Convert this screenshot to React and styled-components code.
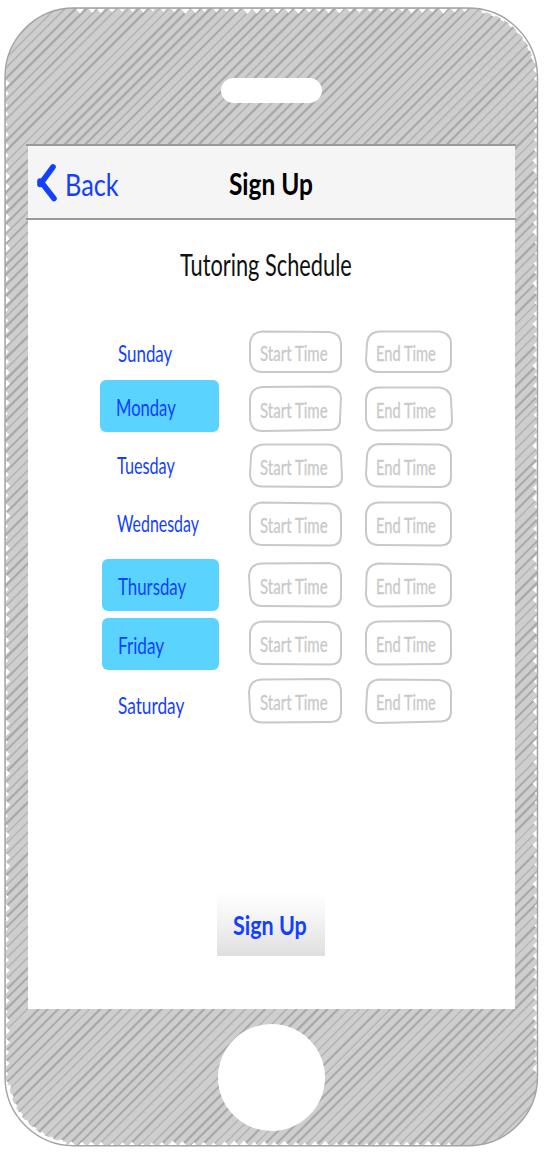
import React, { useLayoutEffect, useRef, useState } from "react";
import styled, { createGlobalStyle } from "styled-components";

const BLUE = "#1240ff";

const GlobalStyle = createGlobalStyle`
  * { box-sizing: border-box; }
  body { margin: 0; background: #fff; }
  button { border: 0; background: none; padding: 0; margin: 0; color: inherit; font: inherit; text-align: left; }
`;

const Phone = styled.div`
  position: relative;
  width: 548px;
  height: 1156px;
  overflow: hidden;
  font-family: Lato, "Open Sans", sans-serif;
`;

const Backdrop = styled.svg`
  position: absolute;
  inset: 0;
`;

const Body = styled.div`
  position: relative;
  display: flex;
  flex-direction: column;
  padding-top: 78px;
`;

const Speaker = styled.div`
  width: 101px;
  height: 25px;
  margin: 0 0 41px 221px;
  border-radius: 13px;
  background: #fff;
`;

const Screen = styled.main`
  display: flex;
  flex-direction: column;
  width: 487px;
  height: 865px;
  margin-left: 28px;
  background: #fff;
`;

const Header = styled.header`
  display: flex;
  flex: none;
  width: 490px;
  height: 76px;
  margin-left: -2px;
  padding-left: 2px;
  border-top: 2px solid #999;
  border-bottom: 2px solid #999;
  background: linear-gradient(#f5f5f5, #f5f5f5) 2px 0 / 487px 100% no-repeat;
`;

const BackButton = styled.button`
  display: flex;
  width: 201px;
  padding-left: 8px;
  color: ${BLUE};
  font-size: 30px;
  line-height: 77px;
`;

const Chevron = styled.svg`
  flex: none;
  width: 29px;
  height: 72px;
`;

const HeaderTitle = styled.h1`
  margin: 0;
  font-size: 30px;
  font-weight: 700;
  line-height: 74px;
  color: #000;
`;

const Heading = styled.h2`
  margin: 24px 0 0 152px;
  font-size: 30px;
  font-weight: 400;
  line-height: 40px;
  color: #111;
`;

const Schedule = styled.div`
  display: flex;
  flex-direction: column;
  margin: 38px 0 0 72px;
`;

const Row = styled.div`
  display: flex;
  align-items: flex-start;
  height: 58px;
`;

const DayCell = styled.div`
  flex: none;
  width: 149px;
  padding-top: ${(p) => p.$drop}px;
  padding-left: ${(p) => p.$inset}px;
`;

const Day = styled.button`
  display: block;
  width: ${(p) => p.$width}px;
  height: 52px;
  padding-left: ${(p) => p.$pad}px;
  border-radius: 6px;
  background: ${(p) => (p.$selected ? "#5ad3ff" : "transparent")};
  color: ${BLUE};
  font-size: 23.5px;
  line-height: 54px;
`;

const FieldBox = styled.div`
  position: relative;
  flex: none;
  width: ${(p) => p.$width}px;
  height: 44px;
  margin-top: ${(p) => p.$drop}px;
  margin-right: 23px;
  padding-left: 11px;
  color: #c9c9c9;
  font-size: 21px;
  line-height: 45px;
  -webkit-text-stroke: 0.3px #c9c9c9;
`;

const FieldOutline = styled.svg`
  position: absolute;
  left: 0;
  top: 0;
  overflow: visible;
`;

const Submit = styled.button`
  width: 108px;
  height: 64px;
  margin: 164px 0 0 189px;
  padding-left: 16px;
  background: linear-gradient(#ffffff, #f6f6f6 35%, #dfdfdf);
  color: ${BLUE};
  font-size: 27px;
  font-weight: 700;
  line-height: 65px;
`;

const HomeButton = styled.div`
  width: 107px;
  height: 107px;
  margin: 15px 0 0 218px;
  border-radius: 50%;
  background: #fff;
`;

const TextSlot = styled.span`
  display: block;
  width: ${(p) => p.$width}px;
  white-space: nowrap;
`;

const TextInk = styled.span`
  display: inline-block;
  transform-origin: 0 50%;
`;

/* Condenses a label horizontally so that it fills the given width. */
function FitText({ width, children }) {
  const ref = useRef(null);
  const [scale, setScale] = useState(1);
  useLayoutEffect(() => {
    setScale(width / ref.current.offsetWidth);
  }, [width, children]);
  return (
    <TextSlot $width={width}>
      <TextInk ref={ref} style={{ transform: `scaleX(${scale})` }}>
        {children}
      </TextInk>
    </TextSlot>
  );
}

const noise = (n) => {
  const v = Math.sin(n * 12.9898) * 43758.5453;
  return v - Math.floor(v);
};

function Hatching() {
  const strokes = [];
  for (let k = 2; k < 165; k++) {
    const c = 10.35 * k + 1.8 + (noise(k) - 0.5) * 1.5;
    const heavy = noise(k + 300);
    strokes.push(
      <path
        key={k}
        d={`M${c} 0L${c - 1156} 1156`}
        stroke={heavy > 0.45 ? "#a9a9a9" : "#b3b3b3"}
        strokeWidth={1.3 + heavy * 1.2}
      />
    );
  }
  return strokes;
}

function Notches() {
  const notches = [];
  for (let k = 0; k < 38; k++) {
    const x = 80 + k * 10.35 + noise(k) * 2;
    const s = 2 + noise(k + 20) * 2.4;
    notches.push(<path key={`t${k}`} d={`M${x - s} 9h${2 * s}l${-s} ${s + 0.6}z`} />);
    const bx = 70 + k * 10.2 + noise(k + 40) * 2;
    notches.push(<path key={`b${k}`} d={`M${bx - s} 1145h${2 * s}l${-s} ${-s}z`} />);
  }
  for (let k = 0; k < 99; k++) {
    const y = 83 + k * 10.3 + noise(k + 60) * 2;
    const s = 2 + noise(k + 80) * 2.5;
    notches.push(<path key={`l${k}`} d={`M5.8 ${y - s}v${2 * s}l${s} ${-s}z`} />);
    const ry = 68 + k * 10.2 + noise(k + 90) * 2;
    notches.push(<path key={`r${k}`} d={`M536.8 ${ry - s}v${2 * s}l${-s} ${-s}z`} />);
  }
  return notches;
}

function PhoneShell() {
  return (
    <Backdrop width="548" height="1156" viewBox="0 0 548 1156" fill="none">
      <clipPath id="shell">
        <rect x="5" y="8" width="532.5" height="1138" rx="69" />
      </clipPath>
      <g clipPath="url(#shell)">
        <rect width="548" height="1156" fill="#cecece" />
        <Hatching />
        <g fill="#fff">
          <Notches />
        </g>
        <g stroke="#fff">
          <path d="M482 9.5A69 69 0 0 1 536 63" strokeWidth="3.5" />
          <path d="M482 11.5A67 67 0 0 1 534 63" strokeWidth="2.5" strokeDasharray="4 6" />
          <path d="M6.5 1085A69 69 0 0 0 66 1144.5" strokeWidth="5" />
          <path d="M8.5 1085A67 67 0 0 0 66 1142.5" strokeWidth="4" strokeDasharray="4 6" />
        </g>
      </g>
      <rect x="5" y="8" width="532.5" height="1137.7" rx="69" stroke="#a3a3a3" strokeWidth="1.4" />
    </Backdrop>
  );
}

/* box: vertical/horizontal offsets giving each outline its hand-drawn slant */
function Field({ label, labelWidth, width, drop, box }) {
  const [lt, t1, t2, rt, rb, b2, b1, lb] = box;
  const w = width - 1;
  const d =
    `M${lt} ${t1 + 12}Q${lt + 1} ${t1 + 1} ${lt + 12} ${t1}` +
    `L${w - 12 + rt} ${t2}Q${w + rt - 1} ${t2 + 1} ${w + rt} ${t2 + 11}` +
    `L${w + rb} ${b2 - 10}Q${w + rb} ${b2} ${w + rb - 11} ${b2}` +
    `L${lb + 12} ${b1}Q${lb + 1} ${b1} ${lb} ${b1 - 12}Z`;
  return (
    <FieldBox $width={width} $drop={drop}>
      <FieldOutline width={width} height="44" fill="none">
        <path d={d} stroke="#c9c9c9" strokeWidth="2" strokeLinejoin="round" />
      </FieldOutline>
      <FitText width={labelWidth}>{label}</FitText>
    </FieldBox>
  );
}

const days = [
  { name: "Sunday", text: 54, x: 18, drop: 4, field: 8,
    start: [1, 1.5, 2, 0, 0, 42, 42, 1], end: [2, 1.5, 1.5, 0, 0, 42, 42, 1] },
  { name: "Monday", text: 60, x: 16, drop: 0, field: 7, selected: true, inset: 0,
    start: [1, 0, -0.5, 0, -1, 43, 44, 1], end: [1, 0.5, 0.5, 0, 1, 43, 43.5, 1] },
  { name: "Tuesday", text: 58, x: 17, drop: 0, field: 6,
    start: [2, 0.5, 0.5, 0, 1, 43, 42.5, 1], end: [2, 0, 0.5, 0, 0, 43, 42.5, 1] },
  { name: "Wednesday", text: 82, x: 17, drop: -1, field: 6,
    start: [1, 0.5, 1.5, 0, 0, 43.5, 43, 1], end: [1, 0.5, 0.5, 0, 0, 43.5, 43, 1] },
  { name: "Thursday", text: 68, x: 18, drop: 5, field: 9, selected: true, inset: 2,
    start: [0, 0.5, 0, 0, 0, 43.5, 43, 1], end: [1.5, 0.5, 1.5, 0, 0, 43, 43.5, 1] },
  { name: "Friday", text: 46, x: 18, drop: 5.5, field: 9, selected: true, inset: 2,
    start: [1, 0.5, 1, 0, 0, 43.5, 43, 1], end: [1, 0.5, 0, 0, 0, 43, 43.5, 1] },
  { name: "Saturday", text: 66, x: 18, drop: 8, field: 9,
    start: [0, 0.5, 0, 0, 0, 43, 43.5, 1], end: [2, 0.5, 1, 0, 0, 42.5, 44, 1] },
];

export default function App() {
  return (
    <Phone>
      <GlobalStyle />
      <PhoneShell />
      <Body>
        <Speaker />
        <Screen>
          <Header>
            <BackButton>
              <Chevron viewBox="0 0 29 72" fill="none">
                <path
                  d="M17 21L5.5 36.5L18 52.5M4 35V38.5"
                  stroke={BLUE}
                  strokeWidth="5.6"
                  strokeLinecap="round"
                  strokeLinejoin="round"
                />
              </Chevron>
              <FitText width={54}>Back</FitText>
            </BackButton>
            <HeaderTitle>
              <FitText width={84}>Sign Up</FitText>
            </HeaderTitle>
          </Header>
          <Heading>
            <FitText width={172}>Tutoring Schedule</FitText>
          </Heading>
          <Schedule>
            {days.map((d) => (
              <Row key={d.name}>
                <DayCell $drop={Math.max(d.drop, 0)} $inset={d.inset || 0}>
                  <Day $selected={d.selected} $width={119 - (d.inset || 0)} $pad={d.x - (d.inset || 0)}>
                    <FitText width={d.text}>{d.name}</FitText>
                  </Day>
                </DayCell>
                <Field label="Start Time" labelWidth={68} width={93} drop={d.field} box={d.start} />
                <Field label="End Time" labelWidth={60} width={87} drop={d.field} box={d.end} />
              </Row>
            ))}
          </Schedule>
          <Submit>
            <FitText width={74}>Sign Up</FitText>
          </Submit>
        </Screen>
        <HomeButton />
      </Body>
    </Phone>
  );
}
